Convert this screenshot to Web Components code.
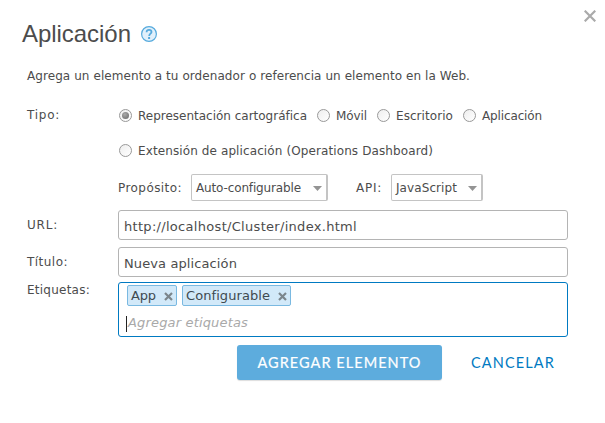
<!DOCTYPE html>
<html lang="es">
<head>
<meta charset="utf-8">
<title>Aplicación</title>
<style>
html,body{margin:0;background:#fff}
body{width:605px;height:423px;overflow:hidden}
</style>
</head>
<body>
<item-dialog></item-dialog>
<script>
const define=(name,html,setup)=>customElements.define(name,class extends HTMLElement{
  connectedCallback(){
    if(this.shadowRoot)return;
    const t=document.createElement('template');
    t.innerHTML=html;
    this.attachShadow({mode:'open'}).append(t.content.cloneNode(true));
    if(setup)setup(this,this.shadowRoot);
  }
});

define('help-icon',`<style>:host{display:block;width:16px;height:16px}svg{display:block}</style>
<svg width="16" height="16" viewBox="0 0 16 16"><circle cx="8" cy="8" r="7.4" fill="#e1f0fb" stroke="#56aadd" stroke-width="1.2"/><path d="M5.6 6.2C5.6 4.6 6.6 3.8 8 3.8s2.5.8 2.5 2.1c0 1.7-2.3 1.9-2.3 4" fill="none" stroke="#56aadd" stroke-width="1.8"/><rect x="7.1" y="11" width="2" height="2" fill="#56aadd"/></svg>`);

define('close-icon',`<style>:host{display:block}svg{display:block}</style>
<svg width="12" height="12" viewBox="0 0 12 12"><path d="M.7.7l10.6 10.6M11.3.7L.7 11.3" stroke="#aaa" stroke-width="2.2"/></svg>`);

define('radio-option',`<style>:host{display:flex;align-items:center;height:16px}
i{box-sizing:border-box;width:13px;height:13px;border:1px solid #999;border-radius:50%;background:linear-gradient(135deg,#eee,#fff);margin-right:6px;display:grid;place-items:center;flex:none}
:host([checked]) i::after{content:"";width:7px;height:7px;border-radius:50%;background:radial-gradient(circle at 40% 35%,#aaa,#666)}slot{display:block;padding-top:2px}</style><i></i><slot></slot>`);

define('drop-down',`<style>:host{box-sizing:border-box;display:flex;align-items:center;justify-content:space-between;height:27px;border:1px solid #c4c4c4;border-right-width:2px;border-radius:2px;padding:0 4px;background:#fff}
svg{display:block;margin-top:1px}</style><slot></slot><svg width="9" height="5" viewBox="0 0 9 5"><path d="M0 0h9L4.5 5z" fill="#949494"/></svg>`);

define('text-field',`<style>:host{box-sizing:border-box;display:flex;align-items:center;width:450px;height:30px;border:1px solid #b4b4b4;border-radius:3px;padding:3px 5px 0;font-size:13px;background:#fff}</style><slot></slot>`);

define('tag-chip',`<style>:host{box-sizing:border-box;display:flex;align-items:center;justify-content:space-between;height:21px;border:1px solid #7ab9e1;border-radius:2px;background:#d2e9f9;padding:0 3px;color:#404a50}svg{display:block;margin-top:1px}</style>
<slot></slot><svg width="9" height="9" viewBox="0 0 9 9"><path d="M1 1l7 7M8 1L1 8" stroke="#7c868c" stroke-width="2.2"/></svg>`);

define('tag-field',`<style>:host{box-sizing:border-box;display:block;width:450px;height:55px;border:1px solid #007ac2;border-radius:3px;padding:2px 8px;font-size:13px;background:#fff}
.tags{display:flex;gap:5px}.entry{display:flex;height:16px;margin:10px 0 0 -1px;padding-left:1px;border-left:1px solid #222;color:#a9a9a9;font-style:italic}.entry slot{display:block;margin-top:-1px}</style>
<div class="tags"><slot></slot></div><div class="entry"><slot name="hint"></slot></div>`);

define('form-row',`<style>:host{display:grid;grid-template-columns:91px 450px;align-items:start}.label{padding-top:var(--label-top,7px);line-height:16px}</style>
<div class="label"><slot name="label"></slot></div><div><slot></slot></div>`);

define('action-button',`<style>:host{box-sizing:border-box;display:flex;align-items:center;justify-content:center;height:35px;border-radius:3px;font:400 14.5px/20px "Lato","Open Sans",sans-serif;color:#007ac2}
:host([primary]){width:205px;background:#5dacdd;color:#fff;box-shadow:0 1px 1px #ddd;-webkit-text-stroke:.2px #fff}</style><slot></slot>`);

define('item-dialog',`<style>
:host{box-sizing:border-box;display:block;width:605px;height:423px;padding:10px 9px 0 27px;background:#fff;color:#4c4c4c;font:12px/16px "DejaVu Sans",sans-serif}
header{display:flex;justify-content:space-between;align-items:flex-start;height:58px;margin-left:-5px}
.title{display:flex;align-items:center;gap:10px;height:48px;font:24px/28px "Liberation Sans",Arial,sans-serif}
.types{display:flex;gap:10px;padding-left:1px}
.second{margin-top:19px}
.selects{display:flex;align-items:center;margin-top:16px}
footer{display:flex;margin:8px 0 0 210px;gap:29px}
</style>
<header><div class="title"><text-run w="109">Aplicación</text-run><help-icon></help-icon></div><close-icon></close-icon></header>
<text-run w="443">Agrega un elemento a tu ordenador o referencia un elemento en la Web.</text-run>
<form-row style="margin-top:23px;--label-top:0px"><text-run slot="label" w="33">Tipo:</text-run>
<div class="types"><radio-option checked><text-run w="169">Representación cartográfica</text-run></radio-option><radio-option><text-run w="31">Móvil</text-run></radio-option><radio-option><text-run w="57">Escritorio</text-run></radio-option><radio-option><text-run w="60">Aplicación</text-run></radio-option></div>
<div class="types second"><radio-option><text-run w="295">Extensión de aplicación (Operations Dashboard)</text-run></radio-option></div>
<div class="selects"><text-run w="64" style="margin-right:9px">Propósito:</text-run><drop-down style="width:137px"><text-run w="105">Auto-configurable</text-run></drop-down><text-run w="26" style="margin:0 9px 0 28px">API:</text-run><drop-down style="width:92px"><text-run w="61">JavaScript</text-run></drop-down></div>
</form-row>
<form-row style="margin-top:9px"><text-run slot="label" w="31">URL:</text-run><text-field><text-run w="233">http://localhost/Cluster/index.html</text-run></text-field></form-row>
<form-row style="margin-top:7px"><text-run slot="label" w="41">Título:</text-run><text-field><text-run w="113">Nueva aplicación</text-run></text-field></form-row>
<form-row style="margin-top:5px;--label-top:0px"><text-run slot="label" w="63">Etiquetas:</text-run><tag-field><tag-chip style="width:50px"><text-run w="25">App</text-run></tag-chip><tag-chip style="width:109px"><text-run w="84">Configurable</text-run></tag-chip><text-run slot="hint" w="120">Agregar etiquetas</text-run></tag-field></form-row>
<footer><action-button primary><text-run w="164">AGREGAR ELEMENTO</text-run></action-button><action-button><text-run w="84">CANCELAR</text-run></action-button></footer>`);

/* A single line of text tracked so that it spans the given width.
   Defined last, once every ancestor has its font in place. */
define('text-run',`<style>:host{display:block;white-space:nowrap;flex:none}span{display:inline-block;white-space:pre}</style><span><slot></slot></span>`,(el,root)=>{
  const s=root.querySelector('span'),w=+el.getAttribute('w');
  el.style.width=w+'px';
  s.style.letterSpacing=((w-s.getBoundingClientRect().width)/el.textContent.length)+'px';
});
</script>
</body>
</html>
